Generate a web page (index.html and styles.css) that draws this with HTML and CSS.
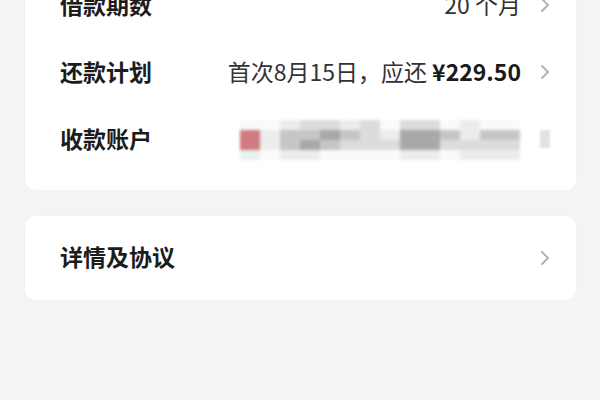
FILE: index.html
```html
<!DOCTYPE html>
<html lang="zh-CN">
<head>
<meta charset="utf-8">
<title>借款详情</title>
<link rel="stylesheet" href="styles.css">
</head>
<body>
<div class="page">
  <section class="card card-main">
    <div class="row">
      <span class="label">借款期数</span>
      <span class="value">20 个月</span>
      <svg class="chev" width="10" height="16" viewBox="0 0 10 16"><polyline points="2,2 8,8 2,14" fill="none" stroke="#b3b3b3" stroke-width="2" stroke-linecap="round" stroke-linejoin="round"/></svg>
    </div>
    <div class="row">
      <span class="label">还款计划</span>
      <span class="value">首次8月15日，应还 <b class="amount">¥229.50</b></span>
      <svg class="chev" width="10" height="16" viewBox="0 0 10 16"><polyline points="2,2 8,8 2,14" fill="none" stroke="#b3b3b3" stroke-width="2" stroke-linecap="round" stroke-linejoin="round"/></svg>
    </div>
    <div class="row">
      <span class="label">收款账户</span>
      <div class="mosaic">
        <i class="m0"></i><i class="m0"></i><i class="m1"></i><i class="m2"></i><i class="m2"></i><i class="m1"></i><i class="m2"></i><i class="m0"></i><i class="m2"></i><i class="m2"></i><i class="m0"></i><i class="m1"></i><i class="m0"></i><i class="m0"></i>
        <i class="mr"></i><i class="m1"></i><i class="m3"></i><i class="m3"></i><i class="m4"></i><i class="m3"></i><i class="m2"></i><i class="m1"></i><i class="m4"></i><i class="m4"></i><i class="m3"></i><i class="m1"></i><i class="m3"></i><i class="m3"></i>
        <i class="mr"></i><i class="m1"></i><i class="m3"></i><i class="m4"></i><i class="m3"></i><i class="m2"></i><i class="m2"></i><i class="m2"></i><i class="m4"></i><i class="m4"></i><i class="m2"></i><i class="m2"></i><i class="m2"></i><i class="m2"></i>
        <i class="mt"></i><i class="m0"></i><i class="m1"></i><i class="m1"></i><i class="m0"></i><i class="m0"></i><i class="m0"></i><i class="m0"></i><i class="m1"></i><i class="m1"></i><i class="m0"></i><i class="m1"></i><i class="m1"></i><i class="m1"></i>
      </div>
      <span class="chev-blur"></span>
    </div>
  </section>
  <section class="card card-link">
    <div class="row">
      <span class="label">详情及协议</span>
      <svg class="chev push" width="10" height="16" viewBox="0 0 10 16"><polyline points="2,2 8,8 2,14" fill="none" stroke="#b3b3b3" stroke-width="2" stroke-linecap="round" stroke-linejoin="round"/></svg>
    </div>
  </section>
</div>
</body>
</html>
```

FILE: styles.css
```css
html, body {
  margin: 0;
  padding: 0;
  background: #f4f4f4;
}
body {
  width: 600px;
  height: 400px;
  overflow: hidden;
  font-family: "Noto Sans CJK SC", "Noto Sans", sans-serif;
}
.page {
  padding: 0 24px 0 25px;
  display: flex;
  flex-direction: column;
  gap: 26px;
}
.card {
  background: #ffffff;
  border-radius: 10px;
  padding: 0 26px 0 35px;
  box-shadow: 0 0 2px rgba(0,0,0,0.03);
}
.card-main {
  margin-top: -29px;
  padding-bottom: 18px;
}
.card-main .row {
  height: 67px;
}
.card-link .row {
  height: 84px;
}
.row {
  display: flex;
  align-items: center;
}
.label {
  font-size: 23px;
  font-weight: 700;
  color: #1c1c1c;
  line-height: 1;
}
.card-link .label {
  margin-top: -3px;
}
.value {
  margin-left: auto;
  font-size: 23px;
  color: #333333;
  line-height: 1;
}
.amount {
  font-weight: 700;
  color: #1a1a1a;
}
.chev {
  margin-left: 19px;
  flex: none;
}
.chev.push {
  margin-left: auto;
}
.mosaic {
  margin-left: auto;
  display: grid;
  grid-template-columns: repeat(14, 20px);
  grid-auto-rows: 10px;
  filter: blur(1.5px);
  margin-top: 2px;
}
.mosaic i { display: block; }
.m0 { background: #fafafa; }
.m1 { background: #ececec; }
.m2 { background: #dcdcdc; }
.m3 { background: #c6c6c6; }
.m4 { background: #a9a9a9; }
.mr { background: #cf7b80; }
.mt { background: #e8f2f0; }
.chev-blur {
  flex: none;
  width: 10px;
  height: 18px;
  margin-left: 20px;
  background: #e2e2e2;
  filter: blur(1px);
}
```
